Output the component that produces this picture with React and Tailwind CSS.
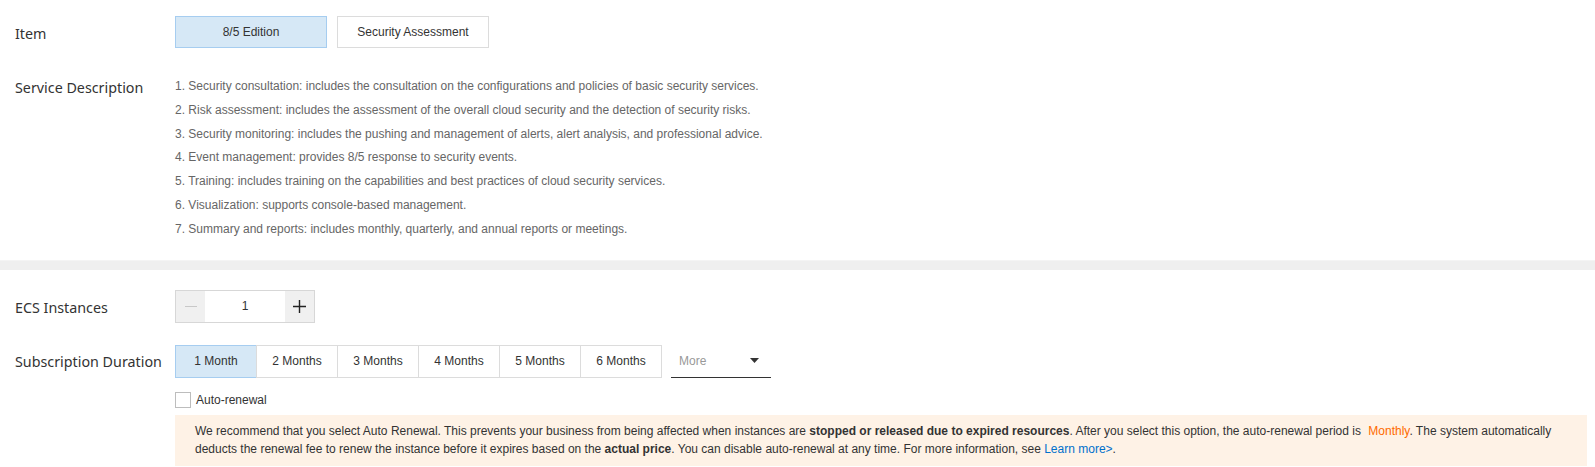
import React from "react";

const labelCls =
  "w-[175px] shrink-0 pl-[15px] text-[14.3px] text-[#333] font-['Noto_Sans',sans-serif]";

const descLines = [
  "1. Security consultation: includes the consultation on the configurations and policies of basic security services.",
  "2. Risk assessment: includes the assessment of the overall cloud security and the detection of security risks.",
  "3. Security monitoring: includes the pushing and management of alerts, alert analysis, and professional advice.",
  "4. Event management: provides 8/5 response to security events.",
  "5. Training: includes training on the capabilities and best practices of cloud security services.",
  "6. Visualization: supports console-based management.",
  "7. Summary and reports: includes monthly, quarterly, and annual reports or meetings.",
];

const durations = ["1 Month", "2 Months", "3 Months", "4 Months", "5 Months", "6 Months"];

const App = () => {
  return (
    <div className="w-[1595px] h-[467px] overflow-hidden bg-white font-['Liberation_Sans',Arial,sans-serif] text-[12px] text-[#333]">
      {/* item + description */}
      <div className="pt-[16px] pb-[18px]">
        <div className="flex items-center">
          <div className={labelCls + " pt-[4px]"}>Item</div>
          <div className="flex gap-[10px]">
            <button
              type="button"
              className="h-[32px] w-[152px] border border-[#a6cdf0] bg-[#d6e8f6] text-[12px] text-[#333]"
            >
              8/5 Edition
            </button>
            <button
              type="button"
              className="h-[32px] w-[152px] border border-[#dcdcdc] bg-white text-[12px] text-[#333]"
            >
              Security Assessment
            </button>
          </div>
        </div>
        <div className="flex mt-[27px]">
          <div className={labelCls + " leading-[26px]"}>Service Description</div>
          <div className="text-[12px] leading-[23.8px] text-[#666]">
            {descLines.map((l) => (
              <div key={l}>{l}</div>
            ))}
          </div>
        </div>
      </div>

      <div className="h-[10px] bg-[#efefef] border-t border-[#f4f4f4]" />

      {/* config */}
      <div className="pt-[20px]">
        <div className="flex items-center">
          <div className={labelCls + " pt-[4px]"}>ECS Instances</div>
          <div className="flex h-[33px] w-[140px] border border-[#d7d7d7]">
            <div className="flex w-[29px] items-center justify-center bg-[#f0f0f0]">
              <span className="block h-[1px] w-[12px] bg-[#c8c8c8]" />
            </div>
            <div className="flex flex-1 items-center justify-center bg-white text-[12px] text-[#333]">
              1
            </div>
            <div className="flex w-[29px] items-center justify-center bg-[#f0f0f0]">
              <svg width="13" height="13" viewBox="0 0 13 13">
                <path d="M6.5 0v13M0 6.5h13" stroke="#222" strokeWidth="1.4" />
              </svg>
            </div>
          </div>
        </div>

        <div className="flex items-center mt-[22px]">
          <div className={labelCls + " pt-[2px]"}>Subscription Duration</div>
          <div className="flex">
            {durations.map((d, i) => (
              <button
                key={d}
                type="button"
                className={
                  "h-[33px] w-[81px] border-y border-l text-[12px] text-[#333] " +
                  (i === 0
                    ? "bg-[#d6e8f6] border-[#a6cdf0]"
                    : "bg-white border-[#dcdcdc]") +
                  (i === durations.length - 1 ? " border-r w-[82px]" : "")
                }
              >
                {d}
              </button>
            ))}
          </div>
          <div className="ml-[9px] flex h-[33px] w-[100px] items-center justify-between border-b border-[#333] pl-[8px] pr-[12px]">
            <span className="text-[12px] text-[#999]">More</span>
            <svg width="9" height="5" viewBox="0 0 9 5">
              <path d="M0 0h9L4.5 5z" fill="#333" />
            </svg>
          </div>
        </div>

        <div className="flex items-center mt-[13px] pl-[175px]">
          <span className="h-[16px] w-[16px] border border-[#bdbdbd] bg-white" />
          <span className="ml-[5px] text-[12px] text-[#333]">Auto-renewal</span>
        </div>

        <div className="ml-[175px] mt-[6px] w-[1412px] bg-[#fef2e6] pl-[20px] pr-[20px] pt-[7px] pb-[8px] text-[12px] leading-[18px] text-[#333]">
          <div className="whitespace-nowrap">
            We recommend that you select Auto Renewal. This prevents your business from being affected when instances are{" "}
            <b>stopped or released due to expired resources</b>. After you select this option, the auto-renewal period is{" "}
            <span className="ml-[4px] text-[#ff6a00]">Monthly</span>. The system automatically
          </div>
          <div className="whitespace-nowrap">
            deducts the renewal fee to renew the instance before it expires based on the <b>actual price</b>. You can
            disable auto-renewal at any time. For more information, see{" "}
            <span className="text-[#0070cc]">Learn more&gt;</span>.
          </div>
        </div>
      </div>
    </div>
  );
};

export default App;
